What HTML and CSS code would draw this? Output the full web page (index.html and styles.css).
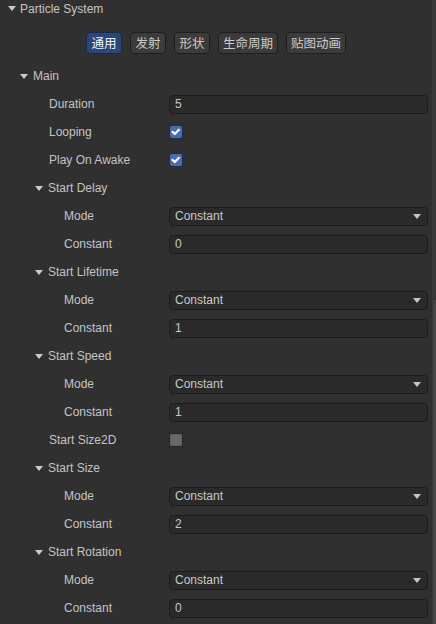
FILE: index.html
```html
<!DOCTYPE html>
<html>
<head>
<meta charset="utf-8">
<link rel="stylesheet" href="styles.css">
</head>
<body>
<div class="panel">
  <div class="main">
    <div class="header"><span class="tri"></span><span>Particle System</span></div>
    <div class="tabs">
      <button class="tab w2 active">通用</button>
      <button class="tab w2">发射</button>
      <button class="tab w2">形状</button>
      <button class="tab w4">生命周期</button>
      <button class="tab w4">贴图动画</button>
    </div>

    <div class="row"><div class="label g1"><span class="tri"></span>Main</div></div>
    <div class="row"><div class="label l1">Duration</div><div class="field"><div class="input">5</div></div></div>
    <div class="row"><div class="label l1">Looping</div><div class="field"><span class="check on"><svg viewBox="0 0 14 14" width="12" height="12"><path d="M2.8 6.8 L5.6 9.4 L10.4 4.4" fill="none" stroke="#fff" stroke-width="2.4" stroke-linecap="round" stroke-linejoin="round"/></svg></span></div></div>
    <div class="row"><div class="label l1">Play On Awake</div><div class="field"><span class="check on"><svg viewBox="0 0 14 14" width="12" height="12"><path d="M2.8 6.8 L5.6 9.4 L10.4 4.4" fill="none" stroke="#fff" stroke-width="2.4" stroke-linecap="round" stroke-linejoin="round"/></svg></span></div></div>

    <div class="row"><div class="label g2"><span class="tri"></span>Start Delay</div></div>
    <div class="row"><div class="label l2">Mode</div><div class="field"><div class="input select">Constant<span class="arrow"></span></div></div></div>
    <div class="row"><div class="label l2">Constant</div><div class="field"><div class="input">0</div></div></div>

    <div class="row"><div class="label g2"><span class="tri"></span>Start Lifetime</div></div>
    <div class="row"><div class="label l2">Mode</div><div class="field"><div class="input select">Constant<span class="arrow"></span></div></div></div>
    <div class="row"><div class="label l2">Constant</div><div class="field"><div class="input">1</div></div></div>

    <div class="row"><div class="label g2"><span class="tri"></span>Start Speed</div></div>
    <div class="row"><div class="label l2">Mode</div><div class="field"><div class="input select">Constant<span class="arrow"></span></div></div></div>
    <div class="row"><div class="label l2">Constant</div><div class="field"><div class="input">1</div></div></div>

    <div class="row"><div class="label l1">Start Size2D</div><div class="field"><span class="check off"></span></div></div>

    <div class="row"><div class="label g2"><span class="tri"></span>Start Size</div></div>
    <div class="row"><div class="label l2">Mode</div><div class="field"><div class="input select">Constant<span class="arrow"></span></div></div></div>
    <div class="row"><div class="label l2">Constant</div><div class="field"><div class="input">2</div></div></div>

    <div class="row"><div class="label g2"><span class="tri"></span>Start Rotation</div></div>
    <div class="row"><div class="label l2">Mode</div><div class="field"><div class="input select">Constant<span class="arrow"></span></div></div></div>
    <div class="row"><div class="label l2">Constant</div><div class="field"><div class="input">0</div></div></div>
  </div>
  <div class="scrollbar"><div class="thumb"></div></div>
</div>
</body>
</html>
```
FILE: styles.css
```css
html, body {
  margin: 0;
  padding: 0;
  background: #303030;
  height: 100%;
  overflow: hidden;
}
body {
  font-family: "Liberation Sans", Arial, "Noto Sans CJK SC", sans-serif;
  font-size: 12px;
  color: #c4c4c4;
}
.panel {
  display: flex;
  height: 624px;
}
.main {
  flex: 1;
  min-width: 0;
}
.scrollbar {
  width: 3px;
  background: #363636;
  border-left: 1px solid #3a3a3a;
  display: flex;
  flex-direction: column;
}
.thumb {
  margin-top: 300px;
  flex: 1;
  background: #454545;
}
.tri {
  display: inline-block;
  width: 0;
  height: 0;
  border-left: 4.5px solid transparent;
  border-right: 4.5px solid transparent;
  border-top: 5px solid #cacaca;
  margin-right: 4px;
}
.header {
  height: 17px;
  padding-left: 8px;
  display: flex;
  align-items: center;
  color: #c6c6c6;
}
.tabs {
  display: flex;
  justify-content: center;
  gap: 8px;
  padding-top: 15px;
  padding-bottom: 8px;
}
.tab {
  height: 22px;
  padding: 0;
  border: 1px solid #1e1e1e;
  border-radius: 4px;
  background: #3b3b3b;
  color: #cbcbcb;
  font-family: "Noto Sans CJK SC", sans-serif;
  font-size: 12.5px;
  line-height: 20px;
  text-align: center;
  cursor: pointer;
}
.tab.w2 { width: 36px; }
.tab.w4 { width: 60px; }
.tab.active {
  background: #2b4678;
  border-color: #1a2947;
  color: #f0f3fa;
}
.row {
  height: 28px;
  display: flex;
  align-items: center;
  padding-right: 4px;
}
.label {
  width: 169px;
  flex: none;
  box-sizing: border-box;
  white-space: nowrap;
  display: flex;
  align-items: center;
}
.label .tri { margin-right: 5px; }
.g1 { padding-left: 20px; }
.l1 { padding-left: 49px; }
.g2 { padding-left: 35px; }
.l2 { padding-left: 64px; }
.field {
  flex: 1;
  display: flex;
  align-items: center;
}
.input {
  flex: 1;
  height: 19px;
  box-sizing: border-box;
  border: 1px solid #1c1c1c;
  border-radius: 4px;
  background: #2a2a2a;
  padding-left: 5px;
  color: #c8c8c8;
  display: flex;
  align-items: center;
}
.select {
  justify-content: space-between;
  padding-right: 6px;
}
.arrow {
  width: 0;
  height: 0;
  border-left: 4px solid transparent;
  border-right: 4px solid transparent;
  border-top: 5px solid #c4c4c4;
}
.check {
  width: 14px;
  height: 14px;
  box-sizing: border-box;
  border-radius: 3px;
  display: inline-flex;
  align-items: center;
  justify-content: center;
}
.check.on {
  background: #4b6cb2;
  border: 1px solid #1f2c48;
}
.check.off {
  background: #676767;
  border: 1px solid #232323;
}
```
